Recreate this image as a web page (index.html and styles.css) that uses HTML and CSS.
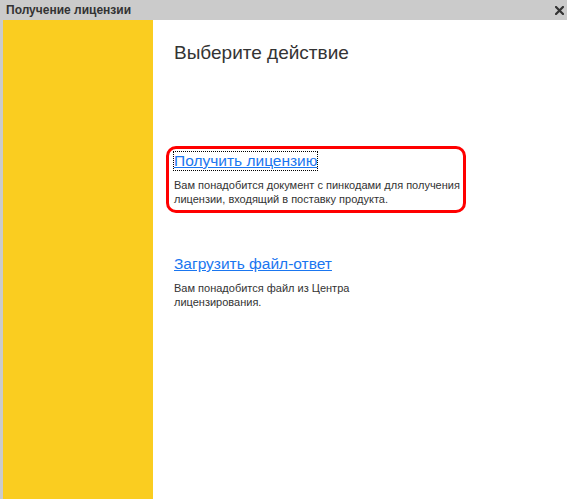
FILE: index.html
```html
<!DOCTYPE html>
<html lang="ru">
<head>
<meta charset="utf-8">
<title>Получение лицензии</title>
<link rel="stylesheet" href="styles.css">
</head>
<body>
<div class="window">
  <div class="titlebar">
    <span class="title">Получение лицензии</span>
    <svg class="close" width="9" height="9" viewBox="0 0 9 9" aria-hidden="true">
      <path d="M1 1 L8 8 M8 1 L1 8" stroke="#333333" stroke-width="2.2" stroke-linecap="square"/>
    </svg>
  </div>
  <div class="main">
    <div class="sidebar"></div>
    <div class="content">
      <h1 class="heading">Выберите действие</h1>
      <div class="option option-highlight">
        <a class="link link-focus" href="#">Получить лицензию</a>
        <p class="desc desc-wide">Вам понадобится документ с пинкодами для получения лицензии, входящий в поставку продукта.</p>
      </div>
      <div class="option option-plain">
        <a class="link" href="#">Загрузить файл-ответ</a>
        <p class="desc desc-narrow">Вам понадобится файл из Центра лицензирования.</p>
      </div>
    </div>
  </div>
</div>
</body>
</html>
```

FILE: styles.css
```css
html, body {
  margin: 0;
  padding: 0;
  background: #ffffff;
}
body {
  font-family: "Liberation Sans", Arial, sans-serif;
  color: #333333;
}
.window {
  width: 567px;
  height: 499px;
  display: flex;
  flex-direction: column;
  overflow: hidden;
}
.titlebar {
  height: 20px;
  flex: none;
  background: #cbcbcb;
  display: flex;
  align-items: center;
  justify-content: space-between;
  padding: 0 3px 0 6px;
}
.title {
  font-size: 12px;
  font-weight: bold;
  color: #333333;
}
.close {
  display: block;
  margin-top: 1px;
}
.main {
  flex: 1;
  display: flex;
  border-left: 3px solid #cbcbcb;
}
.sidebar {
  width: 150px;
  flex: none;
  background: #facd20;
}
.content {
  flex: 1;
  padding-left: 21px;
}
.heading {
  margin: 22px 0 0 0;
  font-size: 19px;
  font-weight: normal;
  line-height: 22px;
  color: #333333;
}
.option-highlight {
  margin: 82px 0 0 -8px;
  width: 289px;
  border: 3px solid #ff0000;
  border-radius: 10px;
  padding: 3px 0 4px 5px;
}
.option-plain {
  margin-top: 42px;
}
.link {
  display: inline-block;
  font-size: 15.5px;
  line-height: 18px;
  color: #1a76f0;
  text-decoration: underline;
}
.link-focus {
  outline: 1px dotted #000000;
  outline-offset: 0;
}
.desc {
  margin: 8px 0 0 0;
  font-size: 11px;
  line-height: 14px;
  color: #333333;
}
.desc-wide {
  width: 289px;
}
.desc-narrow {
  width: 200px;
}
```
